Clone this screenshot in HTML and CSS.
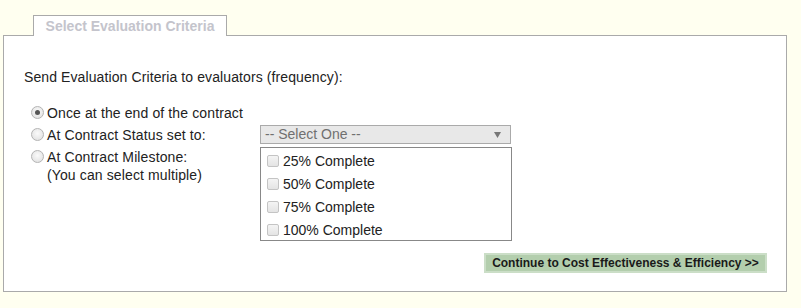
FILE: index.html
```html
<!DOCTYPE html>
<html>
<head>
<meta charset="utf-8">
<link rel="stylesheet" href="styles.css">
</head>
<body>
<div class="wrap">
  <div class="tab">Select Evaluation Criteria</div>
  <div class="panel">
    <p class="intro">Send Evaluation Criteria to evaluators (frequency):</p>
    <div class="grid">
      <label class="opt row1"><span class="radio checked"></span><span>Once at the end of the contract</span></label>
      <label class="opt row2"><span class="radio"></span><span>At Contract Status set to:</span></label>
      <div class="select row2c"><span>-- Select One --</span><svg class="arrow" width="7" height="6" viewBox="0 0 7 6"><path d="M0 0H7L3.5 6Z" fill="#777"/></svg></div>
      <label class="opt row3"><span class="radio"></span><span>At Contract Milestone:<br>(You can select multiple)</span></label>
      <div class="listbox row3c">
        <div class="item"><span class="check"></span>25% Complete</div>
        <div class="item"><span class="check"></span>50% Complete</div>
        <div class="item"><span class="check"></span>75% Complete</div>
        <div class="item"><span class="check"></span>100% Complete</div>
      </div>
    </div>
    <div class="actions">
      <button class="btn">Continue to Cost Effectiveness &amp; Efficiency &gt;&gt;</button>
    </div>
  </div>
</div>
</body>
</html>
```
FILE: styles.css
```css
html, body {
  margin: 0;
  padding: 0;
  background: #fffff0;
  font-family: "Liberation Sans", Arial, sans-serif;
}
.wrap {
  padding: 15px 14px 0 3px;
}
.tab {
  position: relative;
  z-index: 1;
  margin-left: 30px;
  width: 192px;
  height: 20px;
  border: 1px solid #aaa;
  border-bottom: none;
  background: #fff;
  margin-bottom: -1px;
  color: #c4c4cc;
  font-weight: bold;
  font-size: 14px;
  line-height: 20px;
  text-align: center;
}
.panel {
  border: 1px solid #aaa;
  background: #fff;
  height: 257px;
  box-sizing: border-box;
  padding: 33px 19px 0 20px;
}
.intro {
  margin: 0;
  font-size: 14px;
  letter-spacing: 0.1px;
  line-height: 16px;
  color: #222;
}
.grid {
  margin-top: 19px;
  margin-left: 7px;
  display: grid;
  grid-template-columns: 229px 252px;
  grid-template-rows: 18px 19px 94px;
  row-gap: 3px;
  font-size: 14px;
  color: #222;
}
.grid .row3 { margin-top: 1px; }
.opt {
  display: flex;
  align-items: flex-start;
  gap: 3px;
  line-height: 18px;
  letter-spacing: 0.12px;
}
.row1 { grid-column: 1 / span 2; }
.row2 { align-self: center; }
.radio {
  flex: none;
  width: 13px;
  height: 13px;
  margin-top: 2px;
  box-sizing: border-box;
  border-radius: 50%;
  border: 1px solid #b4b4b4;
  background: radial-gradient(circle at 50% 40%, #fafafa 0, #e6e6e6 70%, #dcdcdc 100%);
  position: relative;
}
.radio.checked::after {
  content: "";
  position: absolute;
  left: 3px;
  top: 3px;
  width: 5px;
  height: 5px;
  border-radius: 50%;
  background: #555;
}
.select {
  box-sizing: border-box;
  height: 19px;
  width: 251px;
  border: 1px solid #aaa;
  background: #e8e8e8;
  color: #707070;
  font-size: 14px;
  line-height: 17px;
  padding-left: 4px;
  display: flex;
  align-items: center;
  justify-content: space-between;
  padding-right: 9px;
}
.listbox {
  box-sizing: border-box;
  width: 252px;
  height: 94px;
  border: 1px solid #888;
  padding: 1px 6px 0;
}
.item {
  display: flex;
  align-items: center;
  gap: 4px;
  height: 23px;
  font-size: 14px;
  color: #222;
}
.check {
  width: 12px;
  height: 12px;
  box-sizing: border-box;
  border: 1px solid #c4c4c4;
  border-radius: 2px;
  background: linear-gradient(#f4f4f4, #e4e4e4);
}
.actions {
  display: flex;
  justify-content: flex-end;
  margin-top: 12px;
}
.btn {
  font-family: "Liberation Sans", Arial, sans-serif;
  font-weight: bold;
  font-size: 12px;
  color: #1a1a1a;
  background: #b3cead;
  border: 2px solid #cbdec7;
  height: 20px;
  width: 283px;
  padding: 0;
  line-height: 16px;
}
```
